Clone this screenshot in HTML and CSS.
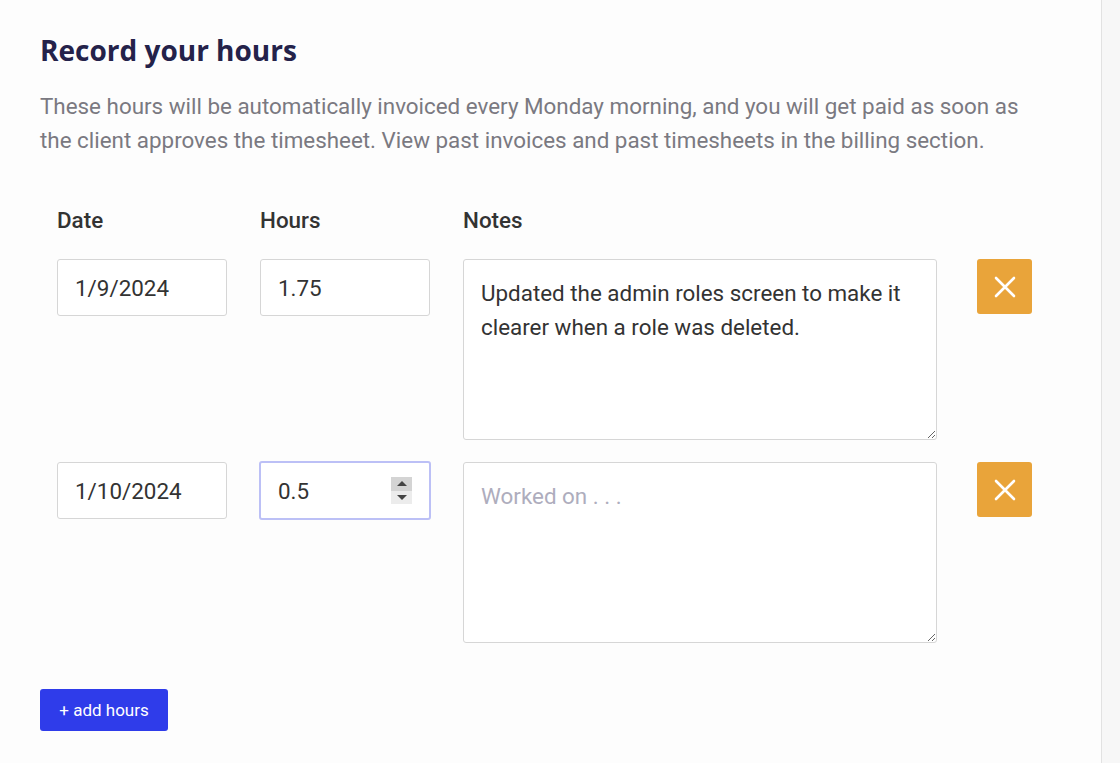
FILE: index.html
```html
<!DOCTYPE html>
<html>
<head>
  <meta charset="UTF-8">
  <title>Record your hours</title>
  <link rel="stylesheet" href="styles.css">
</head>
<body>
  <div class="page">
    <main class="content">
      <h2 class="title">Record your hours</h2>
      <p class="intro">These hours will be automatically invoiced every Monday morning, and you will get paid as soon as the client approves the timesheet. View past invoices and past timesheets in the billing section.</p>

      <div class="hours-form">
        <div class="row labels">
          <label for="date1">Date</label>
          <label for="hours1">Hours</label>
          <label for="notes1">Notes</label>
        </div>

        <div class="row">
          <input class="field" type="text" id="date1" value="1/9/2024">
          <input class="field" type="text" id="hours1" value="1.75">
          <textarea class="notes" id="notes1">Updated the admin roles screen to make it clearer when a role was deleted.</textarea>
          <button class="remove" title="Remove">
            <svg width="22" height="22" viewBox="0 0 22 22"><path d="M2 2 L20 20 M20 2 L2 20" stroke="#fff" stroke-width="2.6" stroke-linecap="round"/></svg>
          </button>
        </div>

        <div class="row">
          <input class="field" type="text" id="date2" value="1/10/2024">
          <div class="field number focused">
            <input type="text" id="hours2" value="0.5">
            <span class="stepper">
              <span class="step up"></span>
              <span class="step down"></span>
            </span>
          </div>
          <textarea class="notes" id="notes2" placeholder="Worked on . . ."></textarea>
          <button class="remove" title="Remove">
            <svg width="22" height="22" viewBox="0 0 22 22"><path d="M2 2 L20 20 M20 2 L2 20" stroke="#fff" stroke-width="2.6" stroke-linecap="round"/></svg>
          </button>
        </div>
      </div>

      <button class="add-btn">+ add hours</button>
    </main>
    <aside class="side"></aside>
  </div>
</body>
</html>
```

FILE: styles.css
```css
* {
  box-sizing: border-box;
}
body {
  margin: 0;
  background: #fdfdfd;
  font-family: Roboto, "Liberation Sans", sans-serif;
  color: #333;
}
.page {
  display: flex;
  min-height: 763px;
}
.content {
  flex: 1;
  padding: 33px 0 0 40px;
}
.side {
  width: 19px;
  border-left: 1px solid #e2e2e2;
  background: #f7f7f7;
}
.title {
  margin: 0;
  font-family: "Open Sans", "DejaVu Sans", sans-serif;
  font-weight: 700;
  font-size: 28px;
  line-height: 34px;
  color: #24224a;
}
.intro {
  margin: 22px 0 0;
  width: 1000px;
  font-size: 22.4px;
  line-height: 34px;
  color: #7a7981;
}
.hours-form {
  margin: 51px 0 0 17px;
  display: flex;
  flex-direction: column;
  gap: 22px;
}
.row {
  display: grid;
  grid-template-columns: 170px 170px 474px 55px;
  column-gap: 33px;
  align-items: start;
}
.labels {
  margin-bottom: 5px;
}
.labels label {
  font-size: 22.4px;
  font-weight: 500;
  line-height: 24px;
  color: #333;
}
.field {
  height: 57px;
  padding: 0 17px;
  border: 1px solid #d6d6d6;
  border-radius: 3px;
  background: #fff;
  font-family: Roboto, sans-serif;
  font-size: 22.4px;
  color: #333;
  outline: none;
}
.number {
  display: flex;
  align-items: center;
  padding-right: 17px;
}
.number input {
  flex: 1;
  min-width: 0;
  border: none;
  outline: none;
  padding: 0;
  background: transparent;
  font-family: Roboto, sans-serif;
  font-size: 22.4px;
  color: #333;
}
.focused {
  height: 59px;
  width: 172px;
  margin: -1px;
  border: 2px solid #bcc0f6;
  padding-left: 17px;
}
.stepper {
  display: flex;
  flex-direction: column;
  width: 21px;
  height: 27px;
}
.step {
  flex: 1;
  display: flex;
  align-items: center;
  justify-content: center;
  background: #ececec;
}
.step.up {
  background: #d4d4d4;
}
.step.up::after {
  content: "";
  border-left: 5px solid transparent;
  border-right: 5px solid transparent;
  border-bottom: 5px solid #444;
}
.step.down::after {
  content: "";
  border-left: 5px solid transparent;
  border-right: 5px solid transparent;
  border-top: 5px solid #444;
}
.notes {
  height: 181px;
  padding: 16px 17px;
  border: 1px solid #d6d6d6;
  border-radius: 3px;
  background: #fff;
  font-family: Roboto, sans-serif;
  font-size: 22.4px;
  line-height: 34px;
  color: #333;
  outline: none;
}
.notes::placeholder {
  color: #aeadbd;
}
.remove {
  margin-left: 7px;
  width: 55px;
  height: 55px;
  border: none;
  border-radius: 3px;
  background: #e9a43a;
  display: flex;
  align-items: center;
  justify-content: center;
  padding: 0;
  cursor: pointer;
}
.add-btn {
  margin-top: 46px;
  width: 128px;
  height: 42px;
  border: none;
  border-radius: 3px;
  background: #2f3cea;
  color: #fff;
  font-family: Roboto, sans-serif;
  font-size: 17px;
  cursor: pointer;
}
```
